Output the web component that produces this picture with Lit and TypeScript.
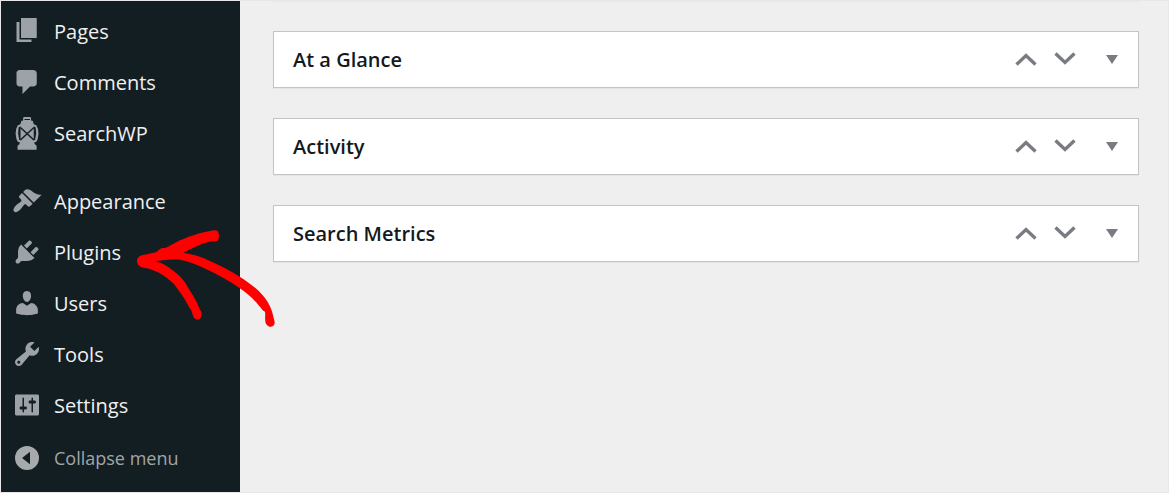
import { LitElement, html, css, svg } from "lit";
import { customElement, property } from "lit/decorators.js";

const ICONS: Record<string, unknown> = {
  pages: svg`<path d="M6 14.67V1.33h10.5v13.34H6zm-1 1h8v1.66H3V4h2v11.67z"/>`,
  comments: svg`<path d="M5 2h9c1.1 0 2.5.6 2.5 2v7c0 1.1-.9 2-2.500 2h-2l-5 5v-5H5c-1.1 0-2-.9-2-2V4c0-1.1.9-2 2-2z"/>`,
  lantern: svg`<path d="M8.2-.7h3.900l.6.6v1.700l1.200.4.6 2.100 1.700.8 1.100 2.300.4 3.200-.5 3.500-.8 1.800-1.500.6.2 1 1.300 1.200v2.600H3.700v-2.600l1.300-1.200.2-1-1.500-.6-.8-1.800-.5-3.500.4-3.200 1.100-2.300 1.700-.8.600-2.100 1.200-.4V-.1z"/><path class="hole" d="M8.300.6h3.700v.8H8.300zM4.400 6.300l1.300-.8V15l-.9-.5-.7-4.200zM15.800 6.300l-1.300-.8V15l.9-.5.7-4.200z"/><path d="M5.600 6.300l9 8.400M14.600 6.300l-9 8.400" class="cut"/>`,
  appearance: svg`<path d="M14.48 11.06L7.41 3.99l1.5-1.5c.5-.56 2.3-.47 3.51.32 1.21.8 1.43 1.28 2.91 2.1 1.18.64 2.45 1.26 4.45.85zm-.71.71L6.7 4.7 4.93 6.47c-.39.39-.39 1.02 0 1.41l1.06 1.06c.39.39.39 1.03 0 1.42-.6.6-1.43 1.11-2.21 1.69-.35.26-.7.53-1.01.84C1.43 14.23.4 16.08 1.4 17.07c.99 1 2.84-.03 4.18-1.36.31-.31.58-.66.85-1.02.57-.78 1.08-1.61 1.69-2.21.39-.39 1.02-.39 1.41 0l1.06 1.06c.39.39 1.02.39 1.41 0z"/>`,
  plugins: svg`<path d="M13.11 4.36L9.87 7.6 8 5.73l3.24-3.24c.35-.34 1.05-.2 1.56.32.52.51.66 1.21.31 1.55zm-8 1.77l.91-1.12 9.01 9.01-1.19.84c-.71.71-2.63 1.16-3.82 1.16H6.14L4.9 17.26c-.59.59-1.54.59-2.12 0-.59-.58-.59-1.53 0-2.12l1.24-1.24v-3.88c0-1.13.4-3.19 1.09-3.89zm7.26 3.97l3.24-3.24c.34-.35 1.04-.21 1.55.31.52.51.66 1.21.31 1.55l-3.24 3.25z"/>`,
  users: svg`<path d="M10 9.25c-2.27 0-2.73-3.44-2.73-3.44C7 4.02 7.82 2 9.97 2c2.16 0 2.98 2.02 2.71 3.81 0 0-.41 3.44-2.68 3.44zm0 2.57L12.72 10c2.39 0 4.52 2.33 4.52 4.53v2.49s-3.65 1.13-7.24 1.13c-3.65 0-7.24-1.13-7.24-1.13v-2.49c0-2.25 1.94-4.48 4.47-4.48z"/>`,
  tools: svg`<path d="M16.68 9.77c-1.34 1.34-3.3 1.67-4.95.99l-5.41 6.52c-.99.99-2.59.99-3.58 0s-.99-2.59 0-3.57l6.52-5.42c-.68-1.65-.35-3.61.99-4.95 1.28-1.28 3.12-1.62 4.72-1.06l-2.89 2.89 2.82 2.82 2.86-2.87c.53 1.58.18 3.39-1.08 4.65zM3.81 16.21c.4.39 1.04.39 1.43 0 .4-.4.4-1.04 0-1.43-.39-.4-1.03-.4-1.43 0-.39.39-.39 1.03 0 1.43z"/>`,
  settings: svg`<path d="M18 16V4c0-.55-.45-1-1-1H3c-.55 0-1 .45-1 1v12c0 .55.45 1 1 1h14c.55 0 1-.45 1-1zM8 11h1c.55 0 1 .45 1 1s-.45 1-1 1H8v1.5c0 .28-.22.5-.5.5s-.5-.22-.5-.5V13H6c-.55 0-1-.45-1-1s.45-1 1-1h1V5.5c0-.28.22-.5.5-.5s.5.22.5.5V11zm5-2h-1c-.55 0-1-.45-1-1s.45-1 1-1h1V5.5c0-.28.22-.5.5-.5s.5.22.5.5V7h1c.55 0 1 .45 1 1s-.45 1-1 1h-1v5.5c0 .28-.22.5-.5.5s-.5-.22-.5-.5V9z"/>`,
  collapse: svg`<path fill-rule="evenodd" d="M10 2a8 8 0 1 1 0 16 8 8 0 1 1 0-16zM12 5.900v8.200L6.700 10z"/>`,
};

const icon = (name: string) =>
  html`<svg class="icon" viewBox="0 0 20 20" aria-hidden="true">${ICONS[name]}</svg>`;

const MENU: { label: string; icon: string }[][] = [
  [
    { label: "Pages", icon: "pages" },
    { label: "Comments", icon: "comments" },
    { label: "SearchWP", icon: "lantern" },
  ],
  [
    { label: "Appearance", icon: "appearance" },
    { label: "Plugins", icon: "plugins" },
    { label: "Users", icon: "users" },
    { label: "Tools", icon: "tools" },
    { label: "Settings", icon: "settings" },
  ],
];

@customElement("admin-menu")
class AdminMenu extends LitElement {
  static styles = css`
    :host {
      display: block;
      background: #131e22;
      padding: 5px 0 8px;
      box-sizing: border-box;
    }
    .group {
      list-style: none;
      margin: 0 0 17px;
      padding: 0;
    }
    .group:last-of-type {
      margin-bottom: 2px;
    }
    .item {
      display: flex;
      align-items: flex-start;
      gap: 12px;
      box-sizing: border-box;
      width: 100%;
      height: 51px;
      padding: 10px 11px;
      border: 0;
      background: none;
      color: #f0f0f1;
      font: 400 20px/31px "Open Sans", sans-serif;
      text-align: left;
      text-decoration: none;
      white-space: nowrap;
      cursor: pointer;
    }
    .collapse {
      color: #a2a5a8;
      font-size: 18px;
    }
    .icon {
      flex: none;
      width: 30px;
      height: 30px;
      overflow: visible;
      fill: #9ca2a7;
    }
    .collapse .icon {
      fill: #a7aaad;
    }
    .cut {
      stroke: #131e22;
      stroke-width: 1;
    }
    .hole {
      fill: #131e22;
    }
  `;

  render() {
    return html`<nav aria-label="Main menu">
      ${MENU.map(
        (group) => html`<ul class="group">
          ${group.map(
            (m) => html`<li><a class="item" href="#">${icon(m.icon)}<span>${m.label}</span></a></li>`
          )}
        </ul>`
      )}
      <button class="item collapse" type="button">${icon("collapse")}<span>Collapse menu</span></button>
    </nav>`;
  }
}

@customElement("post-box")
class PostBox extends LitElement {
  @property() heading = "";

  static styles = css`
    :host {
      display: block;
    }
    .box {
      display: flex;
      align-items: center;
      box-sizing: border-box;
      height: 57px;
      padding: 0 7px 0 19px;
      background: #fff;
      border: 1px solid #c3c4c7;
      box-shadow: 0 1px 1px rgba(0, 0, 0, 0.04);
    }
    .title {
      flex: 1;
      margin: 0;
      color: #14191d;
      font: 550 20px/28px "Open Sans", sans-serif;
    }
    .control {
      display: flex;
      align-items: center;
      justify-content: center;
      width: 39px;
      height: 55px;
      padding: 0 0 1px;
      border: 0;
      background: none;
      cursor: pointer;
    }
    .toggle {
      margin-left: 8px;
    }
    .glyph {
      width: 22px;
      height: 14px;
      fill: #787c82;
    }
    .chevron {
      fill: none;
      stroke: #787c82;
      stroke-width: 3.4;
    }
  `;

  render() {
    return html`<section class="box">
      <h2 class="title">${this.heading}</h2>
      <button class="control" type="button" aria-label="Move up">
        <svg class="glyph chevron" viewBox="0 0 22 14"><path d="M1.500 12.500L11 3.500l9.500 9"/></svg>
      </button>
      <button class="control" type="button" aria-label="Move down">
        <svg class="glyph chevron" viewBox="0 0 22 14"><path d="M1.500 1.500l9.500 9 9.500-9"/></svg>
      </button>
      <button class="control toggle" type="button" aria-label="Toggle panel">
        <svg class="glyph" viewBox="0 0 22 14"><path d="M5 3h12l-6 9z"/></svg>
      </button>
    </section>`;
  }
}

@customElement("app-root")
class AppRoot extends LitElement {
  static styles = css`
    :host {
      display: block;
    }
    .page {
      position: relative;
      display: grid;
      grid-template-columns: 239px minmax(0, 1fr);
      box-sizing: border-box;
      min-height: 100vh;
      background: #efefef;
      border: 1px solid #e8e8e8;
    }
    .content {
      display: flex;
      flex-direction: column;
      gap: 30px;
      padding: 0 29px 0 33px;
    }
    .previous {
      height: 1px;
      margin-bottom: -1px;
      background: #e8e8e8;
    }
    .arrow {
      position: absolute;
      left: 129px;
      top: 224px;
      width: 150px;
      height: 105px;
      fill: #ff0000;
      pointer-events: none;
    }
  `;

  render() {
    return html`<div class="page">
      <admin-menu></admin-menu>
      <main class="content">
        <div class="previous"></div>
        <post-box heading="At a Glance"></post-box>
        <post-box heading="Activity"></post-box>
        <post-box heading="Search Metrics"></post-box>
      </main>
      <svg class="arrow" viewBox="390 165 450 315" aria-hidden="true">
        <path
          d="M642 181C601 187 559 202 526 218C511 225 502 234 490 234C480 234 477 241 468 247L430 255C418 257 411 263 411 272C411 285 420 291 432 293C448 295 461 301 474 307C494 317 509 331 522 342C545 373 559 394 568 413C577 420 576 433 582 443C588 452 603 450 603 440C607 433 605 425 599 418C592 396 577 373 567 358C559 341 550 329 538 317C513 296 492 280 466 274C488 270 521 268 541 269C573 276 600 287 624 300C657 316 688 333 714 351C742 369 761 388 777 407C784 414 787 422 795 425C797 434 793 450 798 461C804 473 820 473 823 463C826 456 821 447 819 436C816 418 803 392 790 378C770 354 746 337 719 320C688 300 659 285 628 272C603 260 576 252 551 248C582 232 613 217 638 214C648 215 657 213 656 204C659 190 655 180 642 181Z"
        />
      </svg>
    </div>`;
  }
}
